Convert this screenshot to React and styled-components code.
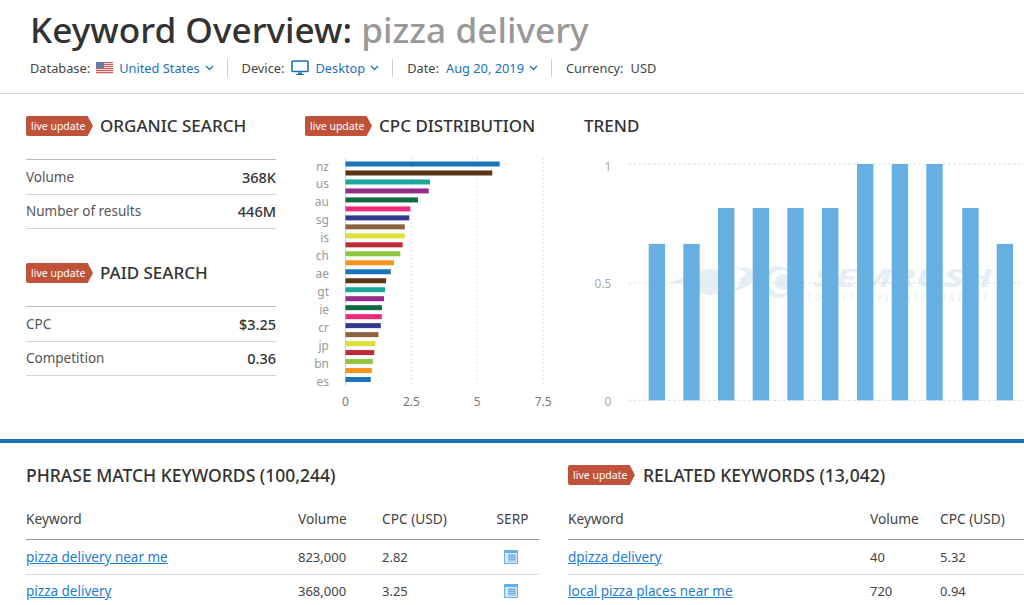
import React from 'react';
import styled, { createGlobalStyle } from 'styled-components';

const FONT = '"Noto Sans", "Open Sans", sans-serif';

// --- Data ---
const cpcBars = [
  [5.85, '#1a72b8'], [5.57, '#5d3415'], [3.21, '#1ba79a'], [3.16, '#952c8c'], [2.75, '#0f6a40'],
  [2.46, '#ee2a7b'], [2.42, '#33398f'], [2.25, '#8a6240'], [2.25, '#dfdf3a'], [2.17, '#be2b38'],
  [2.08, '#8dc63f'], [1.84, '#f7941d'], [1.72, '#1a72b8'], [1.54, '#5d3415'], [1.5, '#1ba79a'],
  [1.46, '#952c8c'], [1.38, '#0f6a40'], [1.38, '#ee2a7b'], [1.34, '#33398f'], [1.25, '#8a6240'],
  [1.13, '#dfdf3a'], [1.09, '#be2b38'], [1.04, '#8dc63f'], [1.0, '#f7941d'], [0.96, '#1a72b8'],
];
const cpcLabels = ['nz', 'us', 'au', 'sg', 'is', 'ch', 'ae', 'gt', 'ie', 'cr', 'jp', 'bn', 'es'];
const trendBars = [0.662, 0.662, 0.814, 0.814, 0.814, 0.814, 1, 1, 1, 0.814, 0.662];
const trendX = [64.7, 99.3, 134, 168.7, 203.3, 238, 273, 307.7, 342.3, 378.3, 412.7];

const phraseRows = [
  { keyword: 'pizza delivery near me', volume: '823,000', cpc: '2.82' },
  { keyword: 'pizza delivery', volume: '368,000', cpc: '3.25' },
];
const relatedRows = [
  { keyword: 'dpizza delivery', volume: '40', cpc: '5.32' },
  { keyword: 'local pizza places near me', volume: '720', cpc: '0.94' },
];

// --- Styled Components ---
const GlobalStyle = createGlobalStyle`
  html, body {
    margin: 0;
    height: 605px;
    overflow: hidden;
    background: #fff;
  }
  body {
    font-family: ${FONT};
    color: #333;
  }
`;

const Page = styled.div`
  width: 1024px;
  height: 605px;
  overflow: hidden;
`;

const Header = styled.header`
  height: 94px;
  box-sizing: border-box;
  padding: 8px 30px 0;
  border-bottom: 1px solid #d6d6d6;
`;

const Title = styled.h1`
  margin: 0;
  font-size: 35.2px;
  line-height: 42px;
  font-weight: 500;
  color: #333;
`;

const Muted = styled.span`
  color: #999;
`;

const MetaRow = styled.div`
  display: flex;
  align-items: center;
  height: 18px;
  margin-top: 9px;
  font-size: 12.8px;
  color: #444;
`;

const MetaItem = styled.div`
  display: flex;
  align-items: center;
  gap: ${p => p.$gap || 8}px;
  padding-right: 13px;
  margin-right: 14px;
  height: 18px;
  border-right: ${p => (p.$last ? 'none' : '1px solid #ccc')};
`;

const MetaLink = styled.span`
  display: inline-flex;
  align-items: center;
  gap: 5px;
  color: #1a72b8;
`;

const Overview = styled.section`
  display: grid;
  grid-template-columns: 279px 279px 1fr;
  height: 349px;
  box-sizing: border-box;
  padding: 21px 0 0 26px;
  border-bottom: 4px solid #1a72b8;
`;

const Column = styled.div`
  display: flex;
  flex-direction: column;
  min-width: 0;
`;

const Heading = styled.div`
  display: flex;
  align-items: center;
  gap: 7px;
  height: 22px;
`;

const HeadingText = styled.h2`
  margin: 0;
  font-size: 17px;
  line-height: 22px;
  font-weight: 500;
  color: #333;
  white-space: nowrap;
`;

const TableTitle = styled(HeadingText)`
  font-size: 17.5px;
`;

const Badge = styled.span`
  display: inline-block;
  width: 67px;
  height: 20px;
  box-sizing: border-box;
  padding-left: 5px;
  font-size: 10.5px;
  line-height: 20px;
  color: #fff;
  background: #c1523a;
  border-radius: 2px 0 0 2px;
  clip-path: polygon(0 0, 92% 0, 100% 50%, 92% 100%, 0 100%);
  white-space: nowrap;
`;

const StatList = styled.div`
  width: 250px;
  margin-top: 22px;
  margin-bottom: 33px;
  border-top: 1px solid #bbb;
`;

const StatRow = styled.div`
  display: flex;
  justify-content: space-between;
  align-items: center;
  height: 34.5px;
  box-sizing: border-box;
  font-size: 13.5px;
  color: #555;
  border-bottom: 1px solid #d5d5d5;
`;

const StatValue = styled.span`
  font-size: 14.5px;
  font-weight: 500;
  color: #333;
`;

const ChartBox = styled.div`
  margin-top: 9px;
  line-height: 0;
`;

const Tables = styled.section`
  display: grid;
  grid-template-columns: 513px 470px;
  column-gap: 29px;
  padding: 21px 0 0 26px;
`;

const TableHead = styled.div`
  display: flex;
  align-items: center;
  gap: 8px;
  height: 22px;
  margin-bottom: 21px;
`;

const Row = styled.div`
  display: grid;
  grid-template-columns: ${p => p.$columns};
  align-items: center;
  height: ${p => (p.$head ? '33px' : '34.5px')};
  box-sizing: border-box;
  font-size: ${p => (p.$head ? '13.7px' : '13px')};
  color: #444;
  border-bottom: ${p => (p.$head ? '1px solid #999' : '1px solid #ddd')};
  padding-bottom: ${p => (p.$head ? '9px' : '0')};
`;

const KeywordLink = styled.a`
  color: #1f7ccf;
  text-decoration: underline;
  font-size: 13.5px;
`;

const SerpCell = styled.span`
  display: flex;
  justify-content: center;
`;

const SerpHead = styled(SerpCell)`
  padding-left: 4px;
`;

// --- Icons ---
function Chevron() {
  return (
    <svg width="9" height="6" viewBox="0 0 9 6" fill="none" stroke="#1a72b8" strokeWidth="1.3">
      <path d="M1 1l3.5 3.5L8 1" />
    </svg>
  );
}

function Flag() {
  return (
    <svg width="17" height="12" viewBox="0 0 17 12">
      <rect width="17" height="12" fill="#f4e6e6" />
      {[0, 2, 4, 6, 8, 10].map(y => (
        <rect key={y} y={y} width="17" height="1.1" fill="#c8605a" />
      ))}
      <rect width="8" height="6.2" fill="#6a7aa8" />
    </svg>
  );
}

function Monitor() {
  return (
    <svg width="18" height="16" viewBox="0 0 18 16">
      <rect x="1" y="1" width="16" height="10.5" rx="1" fill="none" stroke="#1a72b8" strokeWidth="1.6" />
      <path d="M7 12.5h4v1.5h2v1H5v-1h2z" fill="#1a72b8" />
    </svg>
  );
}

function SerpIcon() {
  return (
    <svg width="14" height="14" viewBox="0 0 14 14">
      <rect width="14" height="14" fill="#6aaee4" />
      <rect x="1" y="3" width="12" height="10" fill="#d7e9f8" />
      <rect x="4" y="4" width="8" height="8" fill="#a5cdee" />
      {[5, 7, 9].map(y => (
        <rect key={y} x="4.5" y={y} width="7" height="0.9" fill="#6aaee4" />
      ))}
    </svg>
  );
}

function LiveBadge() {
  return <Badge>live update</Badge>;
}

// --- Charts ---
function CpcChart() {
  const x0 = 40.5;
  const unit = 26.35;
  const tickStyle = { fontFamily: FONT, fontSize: 12, fill: '#777' };
  return (
    <svg width="270" height="264" viewBox="0 0 270 264">
      {[0, 2.5, 5, 7.5].map(v => (
        <line
          key={v}
          x1={x0 + v * unit}
          x2={x0 + v * unit}
          y1="12"
          y2="240"
          stroke={v === 0 ? '#c5d5e2' : '#d5e2ec'}
          strokeDasharray={v === 0 ? undefined : '2 2'}
        />
      ))}
      {cpcBars.map(([value, color], i) => (
        <rect key={i} x={x0} y={15.5 + i * 8.98} width={value * unit} height="5" fill={color} />
      ))}
      {cpcLabels.map((label, i) => (
        <text key={label} x="24" y={24.5 + i * 17.92} textAnchor="end" style={{ ...tickStyle, fill: '#999' }}>
          {label}
        </text>
      ))}
      {[0, 2.5, 5, 7.5].map(v => (
        <text key={v} x={x0 + v * unit} y="260" textAnchor="middle" style={tickStyle}>
          {v}
        </text>
      ))}
    </svg>
  );
}

function TrendChart() {
  const y0 = 254.3;
  const h = 236.3;
  const labelStyle = { fontFamily: FONT, fontSize: 12, fill: '#aaa' };
  return (
    <svg width="440" height="264" viewBox="0 0 440 264">
      {/* faint watermark behind the bars */}
      <g fill="#e6eef5">
        <path d="M84 137l32-11-4 11z" />
        <ellipse cx="127" cy="136" rx="17" ry="13" />
        <path d="M150 122c16-2 22 2 24 8-5 8-14 13-26 16 8-6 10-10 8-14 5-2 6-4 5-6-2-2-6-3-11-4z" />
        <circle cx="194" cy="136" r="16" />
      </g>
      <circle cx="197" cy="136" r="12" fill="#fff" />
      <circle cx="199" cy="136" r="8" fill="#e6eef5" />
      <text x="230" y="141" fontFamily={FONT} fontSize="25" fontWeight="700" fontStyle="italic" textLength="178" lengthAdjust="spacingAndGlyphs" fill="#e6eef5">
        SEMRUSH
      </text>
      <text x="223" y="155" fontFamily={FONT} fontSize="8" fontStyle="italic" textLength="180" fill="#e6eef5">
        COMPETITIVE INTELLIGENCE
      </text>
      {[18, 137, 254.3].map(y => (
        <line key={y} x1="44" x2="440" y1={y} y2={y} stroke="#d9e2e8" strokeDasharray="3 2" />
      ))}
      {trendBars.map((v, i) => (
        <rect key={i} x={trendX[i]} y={y0 - v * h} width="16.4" height={v * h} fill="#66afe0" />
      ))}
      <text x="24" y="25" textAnchor="middle" style={labelStyle}>1</text>
      <text x="19" y="142" textAnchor="middle" style={labelStyle}>0.5</text>
      <text x="24" y="260" textAnchor="middle" style={labelStyle}>0</text>
    </svg>
  );
}

// --- Sections ---
function StatBlock({ title, stats }) {
  return (
    <>
      <Heading>
        <LiveBadge />
        <HeadingText>{title}</HeadingText>
      </Heading>
      <StatList>
        {stats.map(([label, value]) => (
          <StatRow key={label}>
            <span>{label}</span>
            <StatValue>{value}</StatValue>
          </StatRow>
        ))}
      </StatList>
    </>
  );
}

function KeywordTable({ title, live, rows, columns, serp }) {
  return (
    <div>
      <TableHead>
        {live && <LiveBadge />}
        <TableTitle>{title}</TableTitle>
      </TableHead>
      <Row $head $columns={columns}>
        <span>Keyword</span>
        <span>Volume</span>
        <span>CPC (USD)</span>
        {serp && <SerpHead>SERP</SerpHead>}
      </Row>
      {rows.map(row => (
        <Row key={row.keyword} $columns={columns}>
          <span><KeywordLink href="#">{row.keyword}</KeywordLink></span>
          <span>{row.volume}</span>
          <span>{row.cpc}</span>
          {serp && <SerpCell><SerpIcon /></SerpCell>}
        </Row>
      ))}
    </div>
  );
}

export default function App() {
  return (
    <Page>
      <GlobalStyle />
      <Header>
        <Title>Keyword Overview: <Muted>pizza delivery</Muted></Title>
        <MetaRow>
          <MetaItem $gap={6}>
            Database: <Flag />
            <MetaLink>United States <Chevron /></MetaLink>
          </MetaItem>
          <MetaItem $gap={6.5}>
            Device: <Monitor />
            <MetaLink>Desktop <Chevron /></MetaLink>
          </MetaItem>
          <MetaItem $gap={7}>
            Date:
            <MetaLink>Aug 20, 2019 <Chevron /></MetaLink>
          </MetaItem>
          <MetaItem $gap={7} $last>Currency: <span>USD</span></MetaItem>
        </MetaRow>
      </Header>

      <Overview>
        <Column>
          <StatBlock title="ORGANIC SEARCH" stats={[['Volume', '368K'], ['Number of results', '446M']]} />
          <StatBlock title="PAID SEARCH" stats={[['CPC', '$3.25'], ['Competition', '0.36']]} />
        </Column>
        <Column>
          <Heading>
            <LiveBadge />
            <HeadingText>CPC DISTRIBUTION</HeadingText>
          </Heading>
          <ChartBox><CpcChart /></ChartBox>
        </Column>
        <Column>
          <Heading><HeadingText>TREND</HeadingText></Heading>
          <ChartBox><TrendChart /></ChartBox>
        </Column>
      </Overview>

      <Tables>
        <KeywordTable
          title="PHRASE MATCH KEYWORDS (100,244)"
          rows={phraseRows}
          columns="272px 84px 100px 1fr"
          serp
        />
        <KeywordTable
          title="RELATED KEYWORDS (13,042)"
          live
          rows={relatedRows}
          columns="302px 70px 1fr"
        />
      </Tables>
    </Page>
  );
}
